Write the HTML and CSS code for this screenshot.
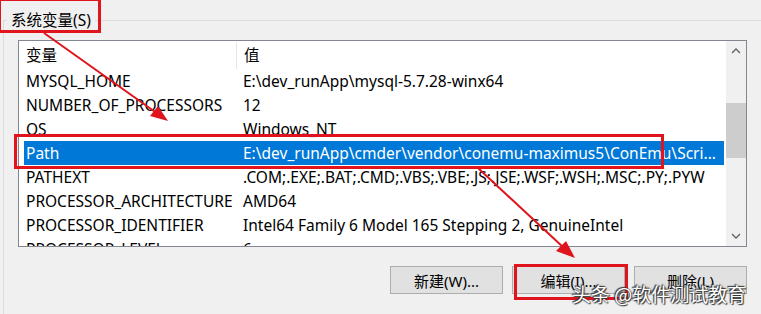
FILE: index.html
```html
<!DOCTYPE html>
<html lang="zh-CN">
<head>
  <meta charset="UTF-8">
  <title>系统变量</title>
  <link rel="stylesheet" href="styles.css">
</head>
<body>

  <div class="page">
    <fieldset class="group">
      <legend>系统变量(S)</legend>

      <div class="content">
        <div class="listbox">
          <div class="rows">
            <div class="header">
              <div class="col1">变量</div>
              <div class="col2">值</div>
            </div>
            <div class="row"><div class="col1">MYSQL_HOME</div><div class="col2">E:\dev_runApp\mysql-5.7.28-winx64</div></div>
            <div class="row"><div class="col1">NUMBER_OF_PROCESSORS</div><div class="col2">12</div></div>
            <div class="row"><div class="col1">OS</div><div class="col2">Windows_NT</div></div>
            <div class="row selected"><div class="col1">Path</div><div class="col2">E:\dev_runApp\cmder\vendor\conemu-maximus5\ConEmu\Scri...</div></div>
            <div class="row"><div class="col1">PATHEXT</div><div class="col2">.COM;.EXE;.BAT;.CMD;.VBS;.VBE;.JS;.JSE;.WSF;.WSH;.MSC;.PY;.PYW</div></div>
            <div class="row"><div class="col1">PROCESSOR_ARCHITECTURE</div><div class="col2">AMD64</div></div>
            <div class="row"><div class="col1">PROCESSOR_IDENTIFIER</div><div class="col2">Intel64 Family 6 Model 165 Stepping 2, GenuineIntel</div></div>
            <div class="row"><div class="col1">PROCESSOR_LEVEL</div><div class="col2">6</div></div>
          </div>
          <div class="scrollbar">
            <svg class="arrow" width="20" height="20" viewBox="0 0 20 20"><path d="M6 12 L10 8 L14 12" fill="none" stroke="#606060" stroke-width="1.3"/></svg>
            <div class="track"><div class="thumb"></div></div>
            <svg class="arrow" width="20" height="20" viewBox="0 0 20 20"><path d="M6 8 L10 12 L14 8" fill="none" stroke="#606060" stroke-width="1.3"/></svg>
          </div>
        </div>

        <div class="buttons">
          <button class="btn">新建(W)...</button>
          <button class="btn">编辑(I)...</button>
          <button class="btn">删除(L)</button>
        </div>
      </div>
    </fieldset>

    <!-- annotations drawn over the dialog -->
    <div class="mark mark-legend"></div>
    <div class="mark mark-path"></div>
    <div class="mark mark-edit"></div>

    <svg class="arrows" width="761" height="314" viewBox="0 0 761 314">
      <line x1="44" y1="33" x2="158" y2="114" stroke="#e0141c" stroke-width="2"/>
      <polygon points="168,121 150,116 158,106" fill="#e0141c"/>
      <line x1="478" y1="168" x2="564" y2="248" stroke="#e0141c" stroke-width="2"/>
      <polygon points="575,258 556,251 566,241" fill="#e0141c"/>
    </svg>

    <div class="watermark">头条 @软件测试教育</div>
  </div>

</body>
</html>
```

FILE: styles.css
```css
body {
  margin: 0;
  background: #f0f0f0;
  font-family: "Noto Sans", "Noto Sans CJK SC", sans-serif;
  font-size: 15.5px;
  color: #000;
}

.page {
  position: relative;
  width: 761px;
  height: 314px;
  overflow: hidden;
}

.group {
  margin: 7px 0 0 3px;
  padding: 0;
  border: 1px solid #dcdcdc;
  border-right: none;
  border-bottom: none;
  height: 320px;
}

.group legend {
  margin-left: 3px;
  padding: 0 4px;
  font-size: 15.5px;
  line-height: 26px;
}

.content {
  margin-left: 14px;
}

.listbox {
  display: flex;
  width: 727px;
  height: 205px;
  margin-top: 7px;
  border: 1px solid #828790;
  background: white;
}

.rows {
  flex: 1;
  overflow: hidden;
  padding: 1px 0 0 5px;
}

.header, .row {
  display: flex;
  white-space: nowrap;
}

.header {
  height: 27px;
  line-height: 27px;
}

.header .col1 {
  border-right: 1px solid #e5e5e5;
}

.row {
  height: 24px;
  line-height: 24px;
}

.col1 {
  width: 210px;
  padding-left: 2px;
  flex-shrink: 0;
}

.col2 {
  padding-left: 7px;
}

.row.selected {
  background: #0078d7;
  color: white;
}

.scrollbar {
  width: 20px;
  margin-left: 2px;
  background: #f0f0f0;
  display: flex;
  flex-direction: column;
}

.scrollbar .arrow {
  display: block;
  flex-shrink: 0;
}

.track {
  flex: 1;
  padding-top: 42px;
}

.thumb {
  height: 55px;
  background: #cdcdcd;
}

.buttons {
  display: flex;
  justify-content: flex-end;
  gap: 9px;
  margin-top: 19px;
  width: 729px;
}

.btn {
  width: 113px;
  height: 28px;
  background: #e1e1e1;
  border: 1px solid #adadad;
  font-family: "Noto Sans", "Noto Sans CJK SC", sans-serif;
  font-size: 15px;
  padding: 0;
}

.mark {
  position: absolute;
  border: 3px solid #e0141c;
  box-sizing: border-box;
}

.mark-legend {
  left: -2px;
  top: -2px;
  width: 103px;
  height: 35px;
}

.mark-path {
  left: 14px;
  top: 134px;
  width: 650px;
  height: 35px;
}

.mark-edit {
  left: 514px;
  top: 264px;
  width: 114px;
  height: 36px;
}

.arrows {
  position: absolute;
  left: 0;
  top: 0;
}

.watermark {
  position: absolute;
  left: 572px;
  top: 280px;
  font-family: "Noto Sans CJK SC", sans-serif;
  font-size: 19px;
  color: white;
  text-shadow: 0 0 2px #333, 1px 1px 1px #333, -1px -1px 1px #333;
}
```
